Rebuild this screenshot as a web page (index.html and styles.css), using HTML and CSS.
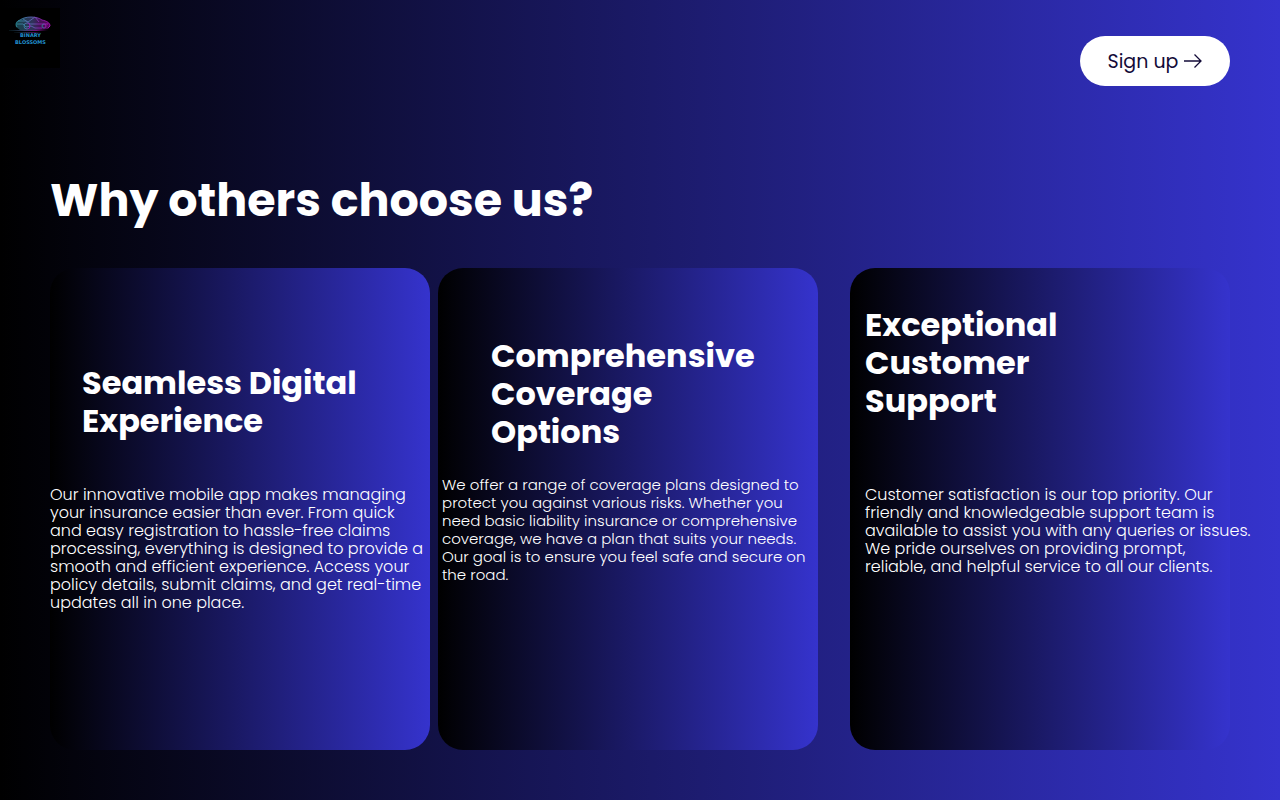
FILE: index.html
```html
<!DOCTYPE html>
<html lang="en">
<head>
<meta charset="utf-8">
<meta name="viewport" content="width=device-width, initial-scale=1">
<title>Binary Blossoms</title>
<link rel="stylesheet" href="styles.css">
</head>
<body>
<header class="header">
  <a class="logo" href="#" aria-label="Binary Blossoms">
    <svg viewBox="0 0 60 60" width="60" height="60" aria-hidden="true">
      <defs>
        <linearGradient id="car" x1="0" x2="1" y1="0" y2="0">
          <stop offset="0" stop-color="#2b8a98"/>
          <stop offset="0.5" stop-color="#6164b4"/>
          <stop offset="0.72" stop-color="#8a22ac"/>
          <stop offset="1" stop-color="#b010bd"/>
        </linearGradient>
        <linearGradient id="road" x1="0" x2="1" y1="0" y2="0">
          <stop offset="0" stop-color="#123a44" stop-opacity="0.3"/>
          <stop offset="0.4" stop-color="#39406c"/>
          <stop offset="0.7" stop-color="#76137f"/>
          <stop offset="1" stop-color="#4a0855" stop-opacity="0"/>
        </linearGradient>
      </defs>
      <path d="M16 19c-1-4 0-6 4-7 5-4 17-4 22 0 5 1 8 3 8 6l-2 3-8 1H20Z" fill="url(#car)" opacity="0.5"/>
      <g fill="none" stroke="url(#car)" stroke-width="0.9">
        <path d="M17 19c-2-3 0-6 3-7 5-4 17-4 22 0 5 1 8 3 8 6l-2 2"/>
        <path d="M18 13h8l4 3h18M23 11l5 3 7-5 4 5M17 16h6l3 3 5-1 4 2h7"/>
        <circle cx="27" cy="18" r="3"/>
        <circle cx="44" cy="18" r="2"/>
      </g>
      <rect x="9" y="22" width="39" height="1" fill="url(#road)"/>
      <rect x="14" y="24" width="28" height="0.600" fill="url(#road)"/>
      <text class="logo-name" x="30.500" y="29" text-anchor="middle">BINARY</text>
      <text class="logo-name" x="30.500" y="35.500" text-anchor="middle">BLOSSOMS</text>
    </svg>
  </a>
  <button class="signup" type="button">
    Sign up
    <svg viewBox="0 0 18 14" width="18" height="14" fill="none" stroke="currentColor" stroke-width="1.300" aria-hidden="true">
      <path d="M0 7H17M10.500 0.500 17 7l-6.500 6.500"/>
    </svg>
  </button>
</header>
<main class="main">
  <h1 class="title">Why others choose us?</h1>
  <div class="cards">
    <article class="card card-digital">
      <h2 class="card-title">Seamless Digital<br>Experience</h2>
      <p class="card-text">Our innovative mobile app makes managing<br>your insurance easier than ever. From quick<br>and easy registration to hassle-free claims<br>processing, everything is designed to provide a<br>smooth and efficient experience. Access your<br>policy details, submit claims, and get real-time<br>updates all in one place.</p>
    </article>
    <article class="card card-coverage">
      <h2 class="card-title">Comprehensive<br>Coverage<br>Options</h2>
      <p class="card-text">We offer a range of coverage plans designed to<br>protect you against various risks. Whether you<br>need basic liability insurance or comprehensive<br>coverage, we have a plan that suits your needs.<br>Our goal is to ensure you feel safe and secure on<br>the road.</p>
    </article>
    <article class="card card-support">
      <h2 class="card-title">Exceptional<br>Customer<br>Support</h2>
      <p class="card-text">Customer satisfaction is our top priority. Our<br>friendly and knowledgeable support team is<br>available to assist you with any queries or issues.<br>We pride ourselves on providing prompt,<br>reliable, and helpful service to all our clients.</p>
    </article>
  </div>
</main>
</body>
</html>
```
FILE: styles.css
```css
* {
  box-sizing: border-box;
}

body {
  margin: 0;
  min-height: 100vh;
  display: flex;
  flex-direction: column;
  background: linear-gradient(90deg, #000, #3533cd);
  color: #fff;
  font-family: Poppins, Inter, sans-serif;
}

.header {
  display: flex;
  justify-content: space-between;
  align-items: flex-start;
  padding: 8px 50px 0 0;
}

.logo {
  display: flex;
  background: #000;
}

.logo-name {
  font-family: "DejaVu Sans", sans-serif;
  font-size: 5px;
  font-weight: 700;
  fill: #2090d0;
}

.signup {
  display: flex;
  align-items: center;
  justify-content: center;
  gap: 6px;
  min-width: 150px;
  height: 50px;
  margin-top: 28px;
  border: 0;
  border-radius: 25px;
  background: #fff;
  color: #130b38;
  font-family: inherit;
  font-size: 19px;
}

.main {
  flex: 1;
  display: flex;
  flex-direction: column;
  padding: 82px 50px 50px;
}

.title {
  margin: 0 0 36px;
  font-size: 46px;
  line-height: 64px;
  font-weight: 700;
}

.cards {
  flex: 1;
  display: flex;
}

.card {
  flex: 1 1 0;
  min-width: 0;
  border-radius: 25px;
  background: linear-gradient(90deg, #000, #3533cd);
  white-space: nowrap;
}

.card-title {
  margin: 0;
  font-size: 32px;
  line-height: 38px;
  font-weight: 700;
}

.card-text {
  margin: 0;
  font-size: 16px;
  line-height: 18px;
  font-weight: 300;
}

.card-digital {
  margin-right: 8px;
  padding-top: 96px;
}

.card-digital .card-title {
  margin: 0 0 46px 32px;
}

.card-coverage {
  margin-right: 32px;
  padding-top: 69px;
}

.card-coverage .card-title {
  margin: 0 0 25px 53px;
}

.card-coverage .card-text {
  margin-left: 4px;
  font-size: 15px;
}

.card-support {
  padding-top: 38px;
}

.card-support .card-title {
  margin: 0 0 66px 15px;
}

.card-support .card-text {
  margin-left: 15px;
}
```
